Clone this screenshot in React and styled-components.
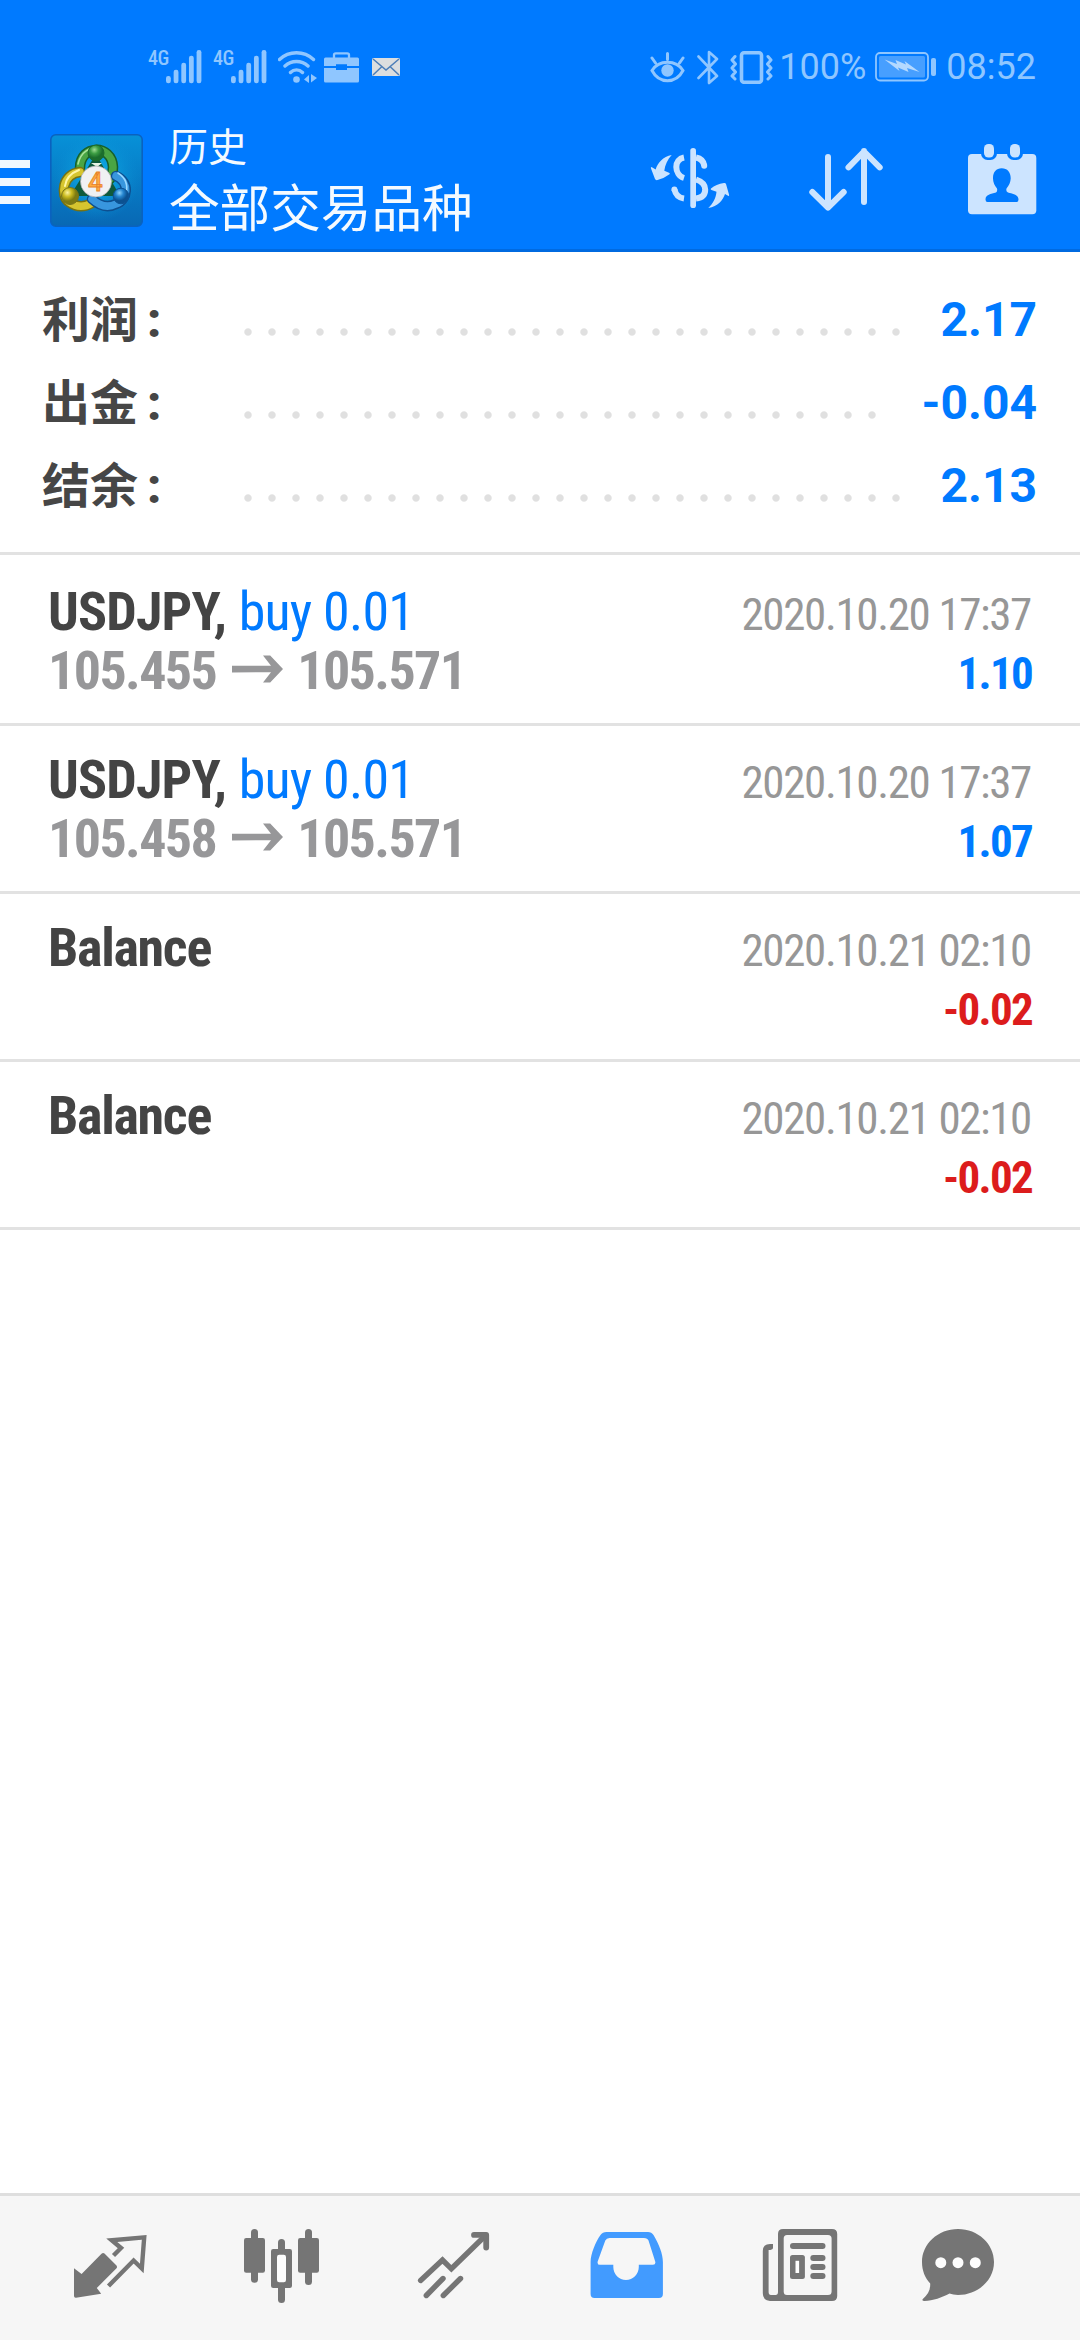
import React from "react";
import styled, { createGlobalStyle } from "styled-components";

const BLUE = "#007aff";
const PALE = "#cce4ff";
const STATUS = "#8fc6ff";
const GRAY = "#757575";

const Global = createGlobalStyle`
  *, *::before, *::after { box-sizing: border-box; }
  body { margin: 0; background: #fff; font-family: Roboto, "Noto Sans CJK SC", sans-serif; }
  svg { display: block; flex: none; }
`;

const Screen = styled.div`
  width: 1080px;
  height: 2340px;
  display: flex;
  flex-direction: column;
  overflow: hidden;
  background: #fff;
`;

const Header = styled.header`
  height: 252px;
  flex: none;
  background: ${BLUE};
  border-bottom: 3px solid #006ae0;
`;

const StatusBar = styled.div`
  height: 108px;
  padding: 26px 44px 0 148px;
  display: flex;
  align-items: center;
  justify-content: space-between;
  color: ${STATUS};
  font-size: 36px;
  line-height: 42px;
`;

const StatusGroup = styled.div`
  display: flex;
  align-items: center;
`;

const StatusItem = styled.span`
  margin-left: ${(p) => p.$gap || 0}px;
  white-space: nowrap;
`;

const Signal = styled.span`
  display: flex;
  width: 54px;
  height: 34px;
  margin-right: 11px;
`;

const SignalLabel = styled.span`
  width: 18px;
  font-size: 20px;
  font-weight: 500;
  line-height: 16px;
  letter-spacing: -0.5px;
  font-stretch: 75%;
`;

const Toolbar = styled.div`
  height: 144px;
  display: flex;
  align-items: center;
`;

const MenuButton = styled.div`
  width: 30px;
  height: 44px;
  margin: 4px 20px 0 0;
  display: flex;
  flex-direction: column;
  justify-content: space-between;
`;

const MenuBar = styled.span`
  height: 8px;
  background: #f0f8ff;
`;

const Titles = styled.div`
  flex: 1;
  margin-left: 26px;
  padding-top: 3px;
  color: #f4faff;
  font-weight: 400;
`;

const Caption = styled.div`
  margin-bottom: 2px;
  font-size: 39px;
  line-height: 54px;
`;

const Title = styled.div`
  font-size: 50.6px;
  line-height: 66px;
`;

const Actions = styled.div`
  display: flex;
  gap: 60px;
  margin-right: 30px;
`;

const Summary = styled.section`
  height: 303px;
  margin-bottom: 3px;
  padding: 26px 43px 0 42px;
  border-bottom: 3px solid #e2e2e2;
`;

const SummaryRow = styled.div`
  height: 83px;
  line-height: 83px;
  display: flex;
  align-items: center;
  font-size: 48px;
  font-weight: 700;
`;

const SummaryLabel = styled.span`
  width: 194px;
  padding-top: 1px;
  color: #464646;
`;

const Colon = styled.span`
  margin-left: 9px;
  font-weight: 900;
`;

const Leader = styled.span`
  width: ${(p) => p.$dots * 24}px;
  height: 24px;
  margin-top: 24px;
  background: radial-gradient(circle, #e0e0e0 3.2px, transparent 4.2px) 0 0 / 24px 24px repeat-x;
`;

const SummaryValue = styled.span`
  margin-left: auto;
  color: ${BLUE};
`;

const Deal = styled.article`
  height: 168px;
  padding: 24px 48px 0 48px;
  border-bottom: 3px solid #e2e2e2;
  font-stretch: 75%;
`;

const Line = styled.div`
  height: 59px;
  font-size: 54px;
  line-height: 59px;
  display: flex;
  align-items: baseline;
  white-space: pre;

  &::before {
    content: "\\200b";
  }
`;

const Name = styled.span`
  font-weight: 700;
  letter-spacing: ${(p) => (p.$plain ? -1.3 : -0.85)}px;
  color: #444;
`;

const Side = styled.span`
  margin-left: 1px;
  font-weight: 400;
  letter-spacing: -0.8px;
  color: ${BLUE};
`;

const Prices = styled.span`
  display: flex;
  align-items: baseline;
  font-weight: 700;
  letter-spacing: -1.6px;
  color: #979799;
`;

const Time = styled.span`
  margin: 0 1px 0 auto;
  font-size: 45px;
  letter-spacing: -1.35px;
  color: #979797;
`;

const Amount = styled.span`
  margin: 0 0 0 auto;
  font-size: 45px;
  font-weight: 700;
  letter-spacing: -1.7px;
  color: ${(p) => (p.$negative ? "#dc1c1c" : BLUE)};
`;

const ArrowSlot = styled.span`
  margin: 0 14px 0 16px;
  padding-bottom: 6px;
`;

const TabBar = styled.nav`
  height: 147px;
  margin-top: auto;
  padding: 0 24px;
  display: grid;
  grid-template-columns: repeat(6, 172px);
  background: #f6f6f6;
  border-top: 3px solid #dedede;
`;

const Tab = styled.div`
  display: flex;
  align-items: center;
  justify-content: center;
`;

const Icon = ({ children, ...rest }) => (
  <svg width="96" height="96" viewBox="0 0 96 96" fill="none" {...rest}>
    {children}
  </svg>
);

const SignalMeter = () => (
  <Signal>
    <SignalLabel>4G</SignalLabel>
    <svg width="36" height="34" viewBox="0 0 36 34" fill={STATUS}>
      {[26, 19.7, 12.7, 5.7, 0].map((y, i) => (
        <rect key={y} x={i * 7.65} y={y} width="4.8" height={33.2 - y} rx="2.2" />
      ))}
    </svg>
  </Signal>
);

const Wifi = () => (
  <svg width="40" height="34" viewBox="0 0 40 34" fill="none" stroke={STATUS} strokeWidth="3.4" strokeLinecap="round">
    <path d="M1.500 9.500C11 .5 26 .5 35.500 9.500M7 16C13.500 10 23.500 10 30 16M12.500 22.500C16 19 21 19 24.500 22.500" />
    <circle cx="18.500" cy="29.500" r="3.300" fill={STATUS} stroke="none" />
    <path d="M31 25v8l-5-3.500zM33 24v8.500l6-4.500z" fill={STATUS} stroke="none" />
  </svg>
);

const Briefcase = () => (
  <svg width="35" height="31" viewBox="0 0 35 31" fill={STATUS}>
    <path d="M10 6V3q0-1.700 1.700-1.700h11.600Q25 1.300 25 3v3" fill="none" stroke={STATUS} strokeWidth="2.300" />
    <path d="M1.500 5.500h32Q35 5.500 35 7v7H23v-1.700H12V14H0V7q0-1.500 1.500-1.500zM0 16h12v2h11v-2h12v13q0 1.500-1.500 1.500h-32Q0 30.500 0 29z" />
  </svg>
);

const Mail = () => (
  <svg width="28" height="18" viewBox="0 0 28 18">
    <rect width="28" height="18" rx="1.500" fill="#dcdedf" />
    <path d="M1 1l13 11L27 1M1 17l9-8.500M27 17l-9-8.500" fill="none" stroke="#4d7eb8" strokeWidth="1.500" />
  </svg>
);

const Eye = () => (
  <svg width="35" height="31" viewBox="0 0 35 31" fill="none" stroke={STATUS} strokeWidth="3" strokeLinecap="round">
    <path d="M2 18.500C9 7.500 26 7.500 33 18.500C26 32 9 32 2 18.500ZM17.500 1.500v6M2 6l3.500 5M33 6l-3.500 5" />
    <circle cx="17.500" cy="18.500" r="6.200" fill={STATUS} stroke="none" />
  </svg>
);

const Bluetooth = () => (
  <svg width="22" height="35" viewBox="0 0 22 35" fill="none" stroke={STATUS} strokeWidth="2.600" strokeLinecap="round" strokeLinejoin="round">
    <path d="M1.500 6.500L20 26l-8 7V2l8 7L1.500 28" />
  </svg>
);

const Vibrate = () => (
  <svg width="43" height="33" viewBox="0 0 43 33" fill="none" stroke={STATUS} strokeWidth="3" strokeLinecap="round" strokeLinejoin="round">
    <rect x="11.500" y="1.800" width="20" height="29.500" rx="2.500" strokeWidth="3.600" />
    <path d="M5 5.500L2 9l3.500 4L2 17l3.500 4L2 25l3 3M38 5.500L41 9l-3.500 4 3.500 4-3.500 4 3.500 4-3 3" />
  </svg>
);

const Battery = () => (
  <svg width="62" height="30" viewBox="0 0 62 30">
    <rect x="1" y="1" width="52" height="27.500" rx="4" fill="none" stroke={STATUS} strokeWidth="1.800" />
    <rect x="4" y="4" width="46" height="21.500" rx="1.500" fill="#479fff" />
    <path d="M9.500 7.500L22 12l-1.500-4L31 12.500 29.500 9 44.500 20 32 16l1.500 4L23 15.500 24.500 19z" fill="#b4d9ff" />
    <rect x="56" y="6" width="5" height="18" rx="2" fill={STATUS} />
  </svg>
);

const Logo = () => (
  <svg width="93" height="93" viewBox="0 0 93 93">
    <defs>
      <linearGradient id="tile" x1="0" y1="0" x2="0" y2="1">
        <stop offset="0" stopColor="#0791d8" />
        <stop offset="1" stopColor="#0868b4" />
      </linearGradient>
      <radialGradient id="glow">
        <stop offset="0" stopColor="#10c4f2" />
        <stop offset="1" stopColor="#0a90d6" stopOpacity="0" />
      </radialGradient>
      <radialGradient id="green" cx=".4" cy=".3">
        <stop offset="0" stopColor="#9fdc93" />
        <stop offset=".5" stopColor="#3c9d43" />
        <stop offset="1" stopColor="#1b6d2c" />
      </radialGradient>
      <radialGradient id="gold" cx=".35" cy=".3">
        <stop offset="0" stopColor="#fbf3a0" />
        <stop offset=".5" stopColor="#cbbb20" />
        <stop offset="1" stopColor="#7c7a12" />
      </radialGradient>
      <radialGradient id="azure" cx=".4" cy=".3">
        <stop offset="0" stopColor="#8fd3fb" />
        <stop offset=".5" stopColor="#2585cf" />
        <stop offset="1" stopColor="#0b5191" />
      </radialGradient>
    </defs>
    <rect x=".8" y=".8" width="91.400" height="91.400" rx="5" fill="url(#tile)" stroke="#0a62bf" strokeWidth="1.600" />
    <circle cx="46" cy="44" r="44" fill="url(#glow)" />
    <path d="M46 20L70 62H20z" fill="#0f5a3c" />
    <g fill="none" strokeLinecap="round">
      <path d="M30 34C30 10 62 10 63 33Q63 40 60 45" stroke="#17602a" strokeWidth="10.500" />
      <path d="M30 34C30 10 62 10 63 33Q63 40 60 45" stroke="#4aa544" strokeWidth="7.500" />
      <path d="M30 38C12 40 10 62 19 68Q30 76 42 69" stroke="#777312" strokeWidth="10.500" />
      <path d="M30 38C12 40 10 62 19 68Q30 76 42 69" stroke="#d6c52f" strokeWidth="7.500" />
      <path d="M66 42C80 48 78 66 66 70Q54 76 42 65" stroke="#0d4f90" strokeWidth="10.500" />
      <path d="M66 42C80 48 78 66 66 70Q54 76 42 65" stroke="#3896de" strokeWidth="7.500" />
      <path d="M28 30C31 17 40 14 46 14" stroke="#a8e29a" strokeWidth="1.600" />
      <path d="M15 52C16 44 21 39 29 36" stroke="#fff6a4" strokeWidth="2" />
      <path d="M68 39C76 44 78 52 76 60" stroke="#9ad8ff" strokeWidth="1.600" />
    </g>
    <path d="M41 29h11l-5 4z" fill="#e6f4e4" />
    <circle cx="46" cy="19" r="8" fill="url(#green)" stroke="#1c6a2c" />
    <circle cx="20" cy="62" r="8.500" fill="url(#gold)" stroke="#77731a" />
    <circle cx="71" cy="62" r="7.800" fill="url(#azure)" stroke="#0c5396" />
    <circle cx="46" cy="47.500" r="15.500" fill="#f0f1f3" stroke="#a9abae" strokeWidth=".7" />
    <text x="45.500" y="56.500" textAnchor="middle" fontFamily="Roboto, sans-serif" fontSize="26" fontWeight="500" fill="#ffad42" stroke="#e8812a" strokeWidth=".8">4</text>
  </svg>
);

const CurrencyIcon = () => (
  <Icon>
    <path d="M48.300 18.800a2.850 2.850 0 0 1 5.700 0V73.200a2.850 2.850 0 0 1-5.700 0z" fill={PALE} />
    <g stroke={PALE} strokeWidth="6">
      <path d="M42 25.500C37 26.500 34.300 30.500 34.300 35S37 44.500 42 46M54 25.500C59 26.500 61.500 29 62.200 33.500M54 47.500C60 49.500 63.200 53 63.200 57.500C63.200 62.500 60 65.800 54 66.500M42 66.500C37 65.800 33.500 62.500 32.500 57.500" />
    </g>
    <circle cx="62.200" cy="33.800" r="3" fill={PALE} />
    <circle cx="32.400" cy="57.500" r="3" fill={PALE} />
    <path d="M29.700 23C21 24.500 15.500 31 13.700 37.500L9.500 35Q8.500 35 9 36.500L13 47Q13.700 48.500 15.500 48Q22 46.500 27.500 42.300Q28.500 41.500 27 40.800L22.300 38.700C23 33 25.500 27.500 29.700 23Z" fill={PALE} />
    <path d="M66.300 76C76 74.500 81 68 83 62L86.500 64Q87.500 64 87 62.500L84 52Q83.500 50.700 82 51Q74 52 69 56.500Q68 57.300 69.500 58L74.500 59.800C74 66 71 71.500 66.300 76Z" fill={PALE} />
  </Icon>
);

const SortIcon = () => (
  <Icon stroke={PALE} strokeWidth="6" strokeLinecap="round" strokeLinejoin="round">
    <path d="M30 25V75M14.300 60L30 75.500 45.700 60M66 70V19M50.500 35.300L66 19.500 81.700 35.300" />
  </Icon>
);

const CalendarIcon = () => (
  <Icon>
    <rect x="14" y="22" width="68.300" height="60.300" rx="4" fill={PALE} />
    <rect x="27" y="9" width="16" height="19" rx="6.500" fill={BLUE} />
    <rect x="53" y="9" width="16" height="19" rx="6.500" fill={BLUE} />
    <rect x="30" y="12" width="10" height="13.500" rx="4.500" fill={PALE} />
    <rect x="56" y="12" width="10" height="13.500" rx="4.500" fill={PALE} />
    <path d="M47.700 36.300C53.500 36.300 56.800 40.500 56.700 46.500C56.600 50.500 54.800 53.500 52.500 56.500Q51.700 59.500 54 60.500C59 62 64.500 62.500 64.500 67.500Q64.500 70 62.500 70H33.500Q31.500 70 31.500 67.500C31.500 62.500 37 62 42 60.500Q43.700 59.500 43 56.500C40.700 53.500 39 50.500 39 46.500C38.800 40.500 42 36.300 47.700 36.300Z" fill={BLUE} />
  </Icon>
);

const PriceArrow = () => (
  <svg width="51" height="28" viewBox="0 0 51 28" fill="#979799">
    <path d="M0 10.800h39L31 .5h7.200L51 14 38.200 27.500H31l8-10.300L0 17.500z" />
  </svg>
);

const QuotesIcon = () => (
  <Icon>
    <path d="M12 48.300L19.600 54 39.500 33.800Q41 32.300 42.500 33.500L54.500 45.500Q55.500 47 54.500 48.300L34.800 68 39.200 73.800 14 77.800Q12 78 12 76z" fill={GRAY} />
    <path d="M51.500 35.500L59 28 49.700 20.200 82.200 17.300 79.800 48.500 71.600 40.500 46.500 66" stroke={GRAY} strokeWidth="4.400" />
  </Icon>
);

const ChartIcon = () => (
  <Icon fill={GRAY}>
    <rect x="10" y="18" width="21" height="34.700" rx="2.200" />
    <rect x="17" y="9" width="7" height="53.700" rx="3.500" />
    <rect x="64" y="18" width="21" height="34.700" rx="2.200" />
    <rect x="71" y="9" width="7" height="56" rx="3.500" />
    <rect x="37" y="29" width="21" height="39" rx="2.200" />
    <rect x="44" y="19" width="7" height="64" rx="3.500" />
    <rect x="43" y="34.700" width="9" height="27.500" rx="2.200" fill="#fdfdfd" />
  </Icon>
);

const TradeIcon = () => (
  <Icon stroke={GRAY} strokeWidth="5.400" strokeLinecap="round">
    <path d="M14.600 60.500L36.500 40 45.400 48.800 79 16" />
    <path d="M68 14.900H80.200V27.500" strokeWidth="5.800" strokeLinejoin="round" />
    <path d="M20.300 75.500L37 58.500M37.300 75.500L54.500 58.500" strokeLinecap="round" />
  </Icon>
);

const HistoryIcon = () => (
  <Icon>
    <path fillRule="evenodd" fill="#429bff" d="M28.500 12H70Q73.500 12 75.500 15C81 24 84.900 34 84.900 42V74Q84.900 78 81 78H16.500Q12.600 78 12.600 74V42C12.600 34 17.500 22 22.500 15Q24.500 12 28.500 12ZM31.500 18Q28.500 18 27.300 20.500L19.700 41.500Q19 44.800 22 44.800H35.300V47C35.300 54 41 60 48 60S60.800 54 60.800 47V44.800H75Q78 44.800 77.200 41.500L70.500 20.500Q69.500 18 66 18Z" />
  </Icon>
);

const NewsIcon = () => (
  <Icon fill={GRAY}>
    <path fillRule="evenodd" d="M33 9H82Q87.200 9 87.200 14V76Q87.200 81 82 81H20Q12.800 80.500 12.800 73V31Q12.800 24 20 24H23V28Q22.500 30 18.600 30V72Q18.600 75 21 75H25.500Q28 75 28 72V14Q28 9 33 9ZM37 15Q33.700 15 33.700 18.500V71.500Q33.700 75 37 75H78Q81.600 75 81.600 71.500V18.500Q81.600 15 78 15Z" />
    <rect x="40" y="23" width="35.500" height="6" rx="3" />
    <rect x="60.300" y="35" width="15.200" height="6" rx="3" />
    <rect x="60.300" y="44" width="15.200" height="6" rx="3" />
    <rect x="60.300" y="53" width="15.200" height="6" rx="3" />
    <rect x="40" y="35" width="14.900" height="24" rx="2.500" />
    <rect x="45.500" y="40.800" width="3.600" height="12.200" fill="#fdfdfd" />
  </Icon>
);

const ChatIcon = () => (
  <Icon fill={GRAY}>
    <path d="M36 9C56 9 72 23.800 72 42S56 75 36 75Q31 75 27.500 73.600C20 77.500 11 81 2.500 81Q-.5 81 .8 79C6 74.500 8.500 70 8.200 63.500C3 58 0 50.500 0 42C0 23.800 16 9 36 9Z" />
    <circle cx="18.800" cy="42.700" r="5.500" fill="#fdfdfd" />
    <circle cx="36" cy="42.700" r="5.500" fill="#fdfdfd" />
    <circle cx="53.300" cy="42.700" r="5.500" fill="#fdfdfd" />
  </Icon>
);

const summary = [
  { label: "利润", value: "2.17", dots: 28 },
  { label: "出金", value: "-0.04", dots: 27 },
  { label: "结余", value: "2.13", dots: 28 },
];

const deals = [
  { name: "USDJPY,", side: "buy 0.01", time: "2020.10.20 17:37", open: "105.455", close: "105.571", amount: "1.10" },
  { name: "USDJPY,", side: "buy 0.01", time: "2020.10.20 17:37", open: "105.458", close: "105.571", amount: "1.07" },
  { name: "Balance", time: "2020.10.21 02:10", amount: "-0.02" },
  { name: "Balance", time: "2020.10.21 02:10", amount: "-0.02" },
];

const tabs = [QuotesIcon, ChartIcon, TradeIcon, HistoryIcon, NewsIcon, ChatIcon];

export default function App() {
  return (
    <Screen>
      <Global />
      <Header>
        <StatusBar>
          <StatusGroup>
            <SignalMeter />
            <SignalMeter />
            <Wifi />
            <StatusItem $gap={6}><Briefcase /></StatusItem>
            <StatusItem $gap={13}><Mail /></StatusItem>
          </StatusGroup>
          <StatusGroup>
            <Eye />
            <StatusItem $gap={12}><Bluetooth /></StatusItem>
            <StatusItem $gap={11}><Vibrate /></StatusItem>
            <StatusItem $gap={6}>100%</StatusItem>
            <StatusItem $gap={9}><Battery /></StatusItem>
            <StatusItem $gap={9}>08:52</StatusItem>
          </StatusGroup>
        </StatusBar>
        <Toolbar>
          <MenuButton>
            <MenuBar />
            <MenuBar />
            <MenuBar />
          </MenuButton>
          <Logo />
          <Titles>
            <Caption>历史</Caption>
            <Title>全部交易品种</Title>
          </Titles>
          <Actions>
            <CurrencyIcon />
            <SortIcon />
            <CalendarIcon />
          </Actions>
        </Toolbar>
      </Header>

      <Summary>
        {summary.map((s) => (
          <SummaryRow key={s.label}>
            <SummaryLabel>
              {s.label}
              <Colon>:</Colon>
            </SummaryLabel>
            <Leader $dots={s.dots} />
            <SummaryValue>{s.value}</SummaryValue>
          </SummaryRow>
        ))}
      </Summary>

      {deals.map((d, i) => (
        <Deal key={i}>
          <Line>
            <Name $plain={!d.side}>
              {d.name}
              {d.side && <Side> {d.side}</Side>}
            </Name>
            <Time>{d.time}</Time>
          </Line>
          <Line>
            {d.open && (
              <Prices>
                {d.open}
                <ArrowSlot><PriceArrow /></ArrowSlot>
                {d.close}
              </Prices>
            )}
            <Amount $negative={d.amount.startsWith("-")}>{d.amount}</Amount>
          </Line>
        </Deal>
      ))}

      <TabBar>
        {tabs.map((TabIcon, i) => (
          <Tab key={i}>
            <TabIcon />
          </Tab>
        ))}
      </TabBar>
    </Screen>
  );
}
